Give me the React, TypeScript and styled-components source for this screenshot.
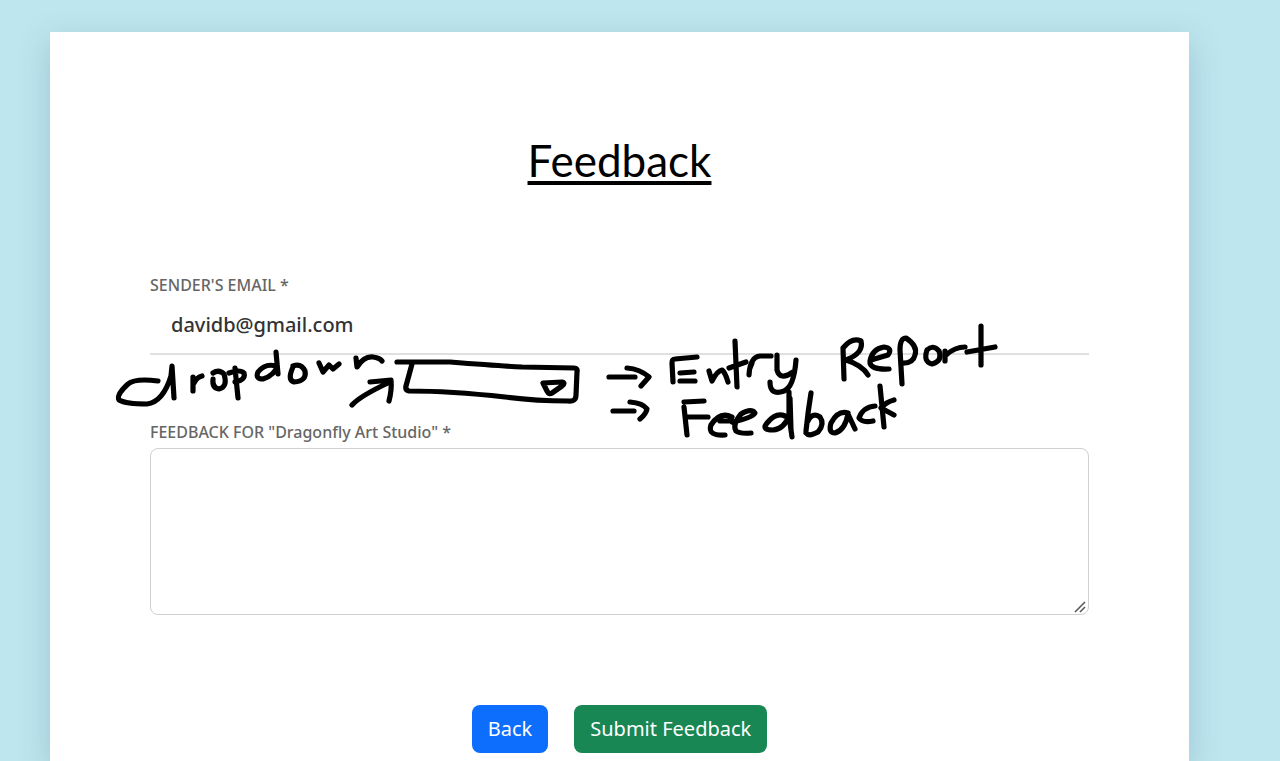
import React from 'react';
import styled, { createGlobalStyle } from 'styled-components';

const GlobalStyle = createGlobalStyle`
  *, *::before, *::after { box-sizing: border-box; }
  body {
    margin: 0;
    background: #bde6ef;
    font-family: "Noto Sans", "Open Sans", sans-serif;
    color: #212529;
  }
`;

const Page = styled.main`
  display: flex;
  flex-direction: column;
  min-height: 100vh;
  padding: 32px 91px 0 50px;
  overflow: hidden;
`;

const Card = styled.section`
  flex: 1;
  padding: 92px 100px 8px;
  background: #fff;
  box-shadow: 0 10px 30px rgba(70, 100, 125, 0.25);
`;

const Title = styled.h1`
  margin: 0 0 76px;
  font-family: Lato, sans-serif;
  font-size: 44px;
  font-weight: 400;
  line-height: 72px;
  text-align: center;
  text-decoration: underline;
  text-decoration-thickness: 4px;
  text-underline-offset: 4px;
  text-decoration-skip-ink: none;
  color: #000;
`;

const Form = styled.form`
  display: flex;
  flex-direction: column;
`;

const Field = styled.div`
  display: flex;
  flex-direction: column;
`;

const Label = styled.label`
  font-size: 16px;
  font-weight: 500;
  line-height: 26px;
  color: #666;
`;

const EmailInput = styled.input`
  width: 100%;
  height: 57px;
  padding: 0 21px 2px;
  border: 0;
  border-bottom: 2px solid #e0e0e0;
  background: transparent;
  font: inherit;
  font-size: 20px;
  font-weight: 500;
  color: #333;
  outline: none;
`;

const AreaBox = styled.div`
  position: relative;
  margin-top: 3px;
`;

const FeedbackArea = styled.textarea`
  display: block;
  width: 100%;
  height: 167px;
  padding: 8px 12px;
  border: 1px solid #d0d0d2;
  border-radius: 8px;
  background: #fff;
  font: inherit;
  resize: vertical;

  &::-webkit-resizer { background: transparent; }
`;

const Grip = styled.svg`
  position: absolute;
  right: 3px;
  bottom: 2px;
  width: 12px;
  height: 12px;
  pointer-events: none;
`;

const NoteSpace = styled.div`
  position: relative;
  height: 64px;
`;

const Sketch = styled.svg`
  position: absolute;
  left: -40px;
  top: -35px;
  width: 900px;
  height: 130px;
  pointer-events: none;
`;

const Actions = styled.div`
  display: flex;
  justify-content: center;
  gap: 26px;
  margin-top: 90px;
`;

const Button = styled.button<{ $color: string }>`
  height: 48px;
  padding: 0 16px 2px;
  border: 0;
  border-radius: 8px;
  background: ${({ $color }) => $color};
  color: #fff;
  font: inherit;
  font-size: 20px;
  cursor: pointer;
`;

const strokes = [
  // dropdown
  'M158 381 Q135 378 128 384 Q116 395 119 400 Q126 404 147 404 Q163 402 171 376 L172 366 L174 398',
  'M193 377 L193 391 M194 383 Q197 377 202 376',
  'M213 373 Q219 369 224 374 Q228 387 219 389 Q212 388 213 379',
  'M235 368 L238 398 M229 373 Q240 369 244 373 Q246 380 235 382',
  'M276 352 L278 374 M276 366 Q265 363 258 372 Q255 379 263 379 Q275 375 277 366',
  'M293 367 Q287 380 294 382 Q307 381 305 371 Q301 363 293 366',
  'M319 363 L323 372 L329 365 L333 369 L339 364',
  'M356 358 L357 367 Q364 356 373 357 Q380 358 382 361',
  // arrow towards the box
  'M352 405 Q360 396 390 382 M370 382 L391 380 Q392 389 389 401',
  // drop-down box
  'M397 362 L450 362 Q500 366 522 367 L574 368 Q578 368 577 372 L576 395 Q576 402 568 401 Q535 401 505 397 Q450 391 409 391 Q405 390 406 386 L412 364',
  'M543 383 L562 382 Q566 383 562 386 L552 393 Q549 395 547 391 Z',
  // arrows to the options
  'M609 377 L635 377 M627 368 Q640 369 649 377 L641 386',
  'M613 411 L634 411 M630 402 Q643 403 647 409 Q646 414 640 419',
  // Entry
  'M697 357 L675 359 Q672 359 672 363 L673 382 M680 373 L694 372 M680 381 L695 381',
  'M709 371 L712 381 Q717 371 722 370 Q725 372 728 382',
  'M735 341 L737 387 M729 368 L746 362',
  'M749 375 Q750 357 760 356 L771 356 M750 368 L752 363',
  'M777 355 L777 370 Q780 381 793 372 M796 360 Q794 387 784 391 Q770 396 770 382',
  // Report
  'M844 379 L843 348 Q852 337 861 341 Q864 353 846 360 Q862 365 868 375',
  'M871 360 L888 355 Q893 348 884 347 Q872 349 870 361 Q869 370 889 369',
  'M902 384 L900 350 Q900 338 906 338 Q918 346 915 355 Q913 364 901 363',
  'M927 350 Q923 362 932 364 Q943 361 939 351 Q933 344 927 350',
  'M945 351 L945 361 M946 355 Q955 347 965 347',
  'M981 326 L981 365 M967 352 L995 347',
  // Feedback
  'M684 402 L704 401 M684 407 L687 435 M687 417 L708 417',
  'M720 421 L729 421 L732 417 Q720 411 711 425 Q707 436 725 435',
  'M732 422 Q752 418 755 413 Q751 408 741 414 Q732 425 736 431 Q740 434 751 433',
  'M789 392 L789 416 L792 437 M790 398 L791 430 M785 416 Q776 412 767 423 Q761 430 773 430 Q784 429 789 416',
  'M811 393 Q808 411 806 431 M808 421 Q812 412 820 417 Q825 424 818 432 Q809 437 806 433',
  'M848 413 Q838 410 831 423 Q828 433 835 433 Q845 430 848 414 L855 429',
  'M875 406 Q863 407 859 418 Q862 423 873 421',
  'M880 386 L884 427 M894 400 Q886 402 881 408 L894 415',
];

function HandwrittenNote() {
  return (
    <Sketch
      viewBox="110 320 900 130"
      role="img"
      aria-label="dropdown: Entry Report, Feedback"
      fill="none"
      stroke="#000"
      strokeWidth="5.2"
      strokeLinecap="round"
      strokeLinejoin="round"
    >
      {strokes.map((d) => (
        <path key={d} d={d} />
      ))}
    </Sketch>
  );
}

export default function App() {
  return (
    <>
      <GlobalStyle />
      <Page>
        <Card>
          <Title>Feedback</Title>
          <Form onSubmit={(e) => e.preventDefault()}>
            <Field>
              <Label htmlFor="email">SENDER'S EMAIL *</Label>
              <EmailInput id="email" type="email" defaultValue="davidb@gmail.com" />
            </Field>
            <NoteSpace>
              <HandwrittenNote />
            </NoteSpace>
            <Field>
              <Label htmlFor="feedback">FEEDBACK FOR "Dragonfly Art Studio" *</Label>
              <AreaBox>
                <FeedbackArea id="feedback" />
                <Grip viewBox="0 0 12 12" stroke="#55555a" strokeWidth="1.5" aria-hidden="true">
                  <path d="M1 11 L11 1 M6 11 L11 6" />
                </Grip>
              </AreaBox>
            </Field>
            <Actions>
              <Button type="button" $color="#0d6efd">Back</Button>
              <Button type="submit" $color="#198754">Submit Feedback</Button>
            </Actions>
          </Form>
        </Card>
      </Page>
    </>
  );
}
